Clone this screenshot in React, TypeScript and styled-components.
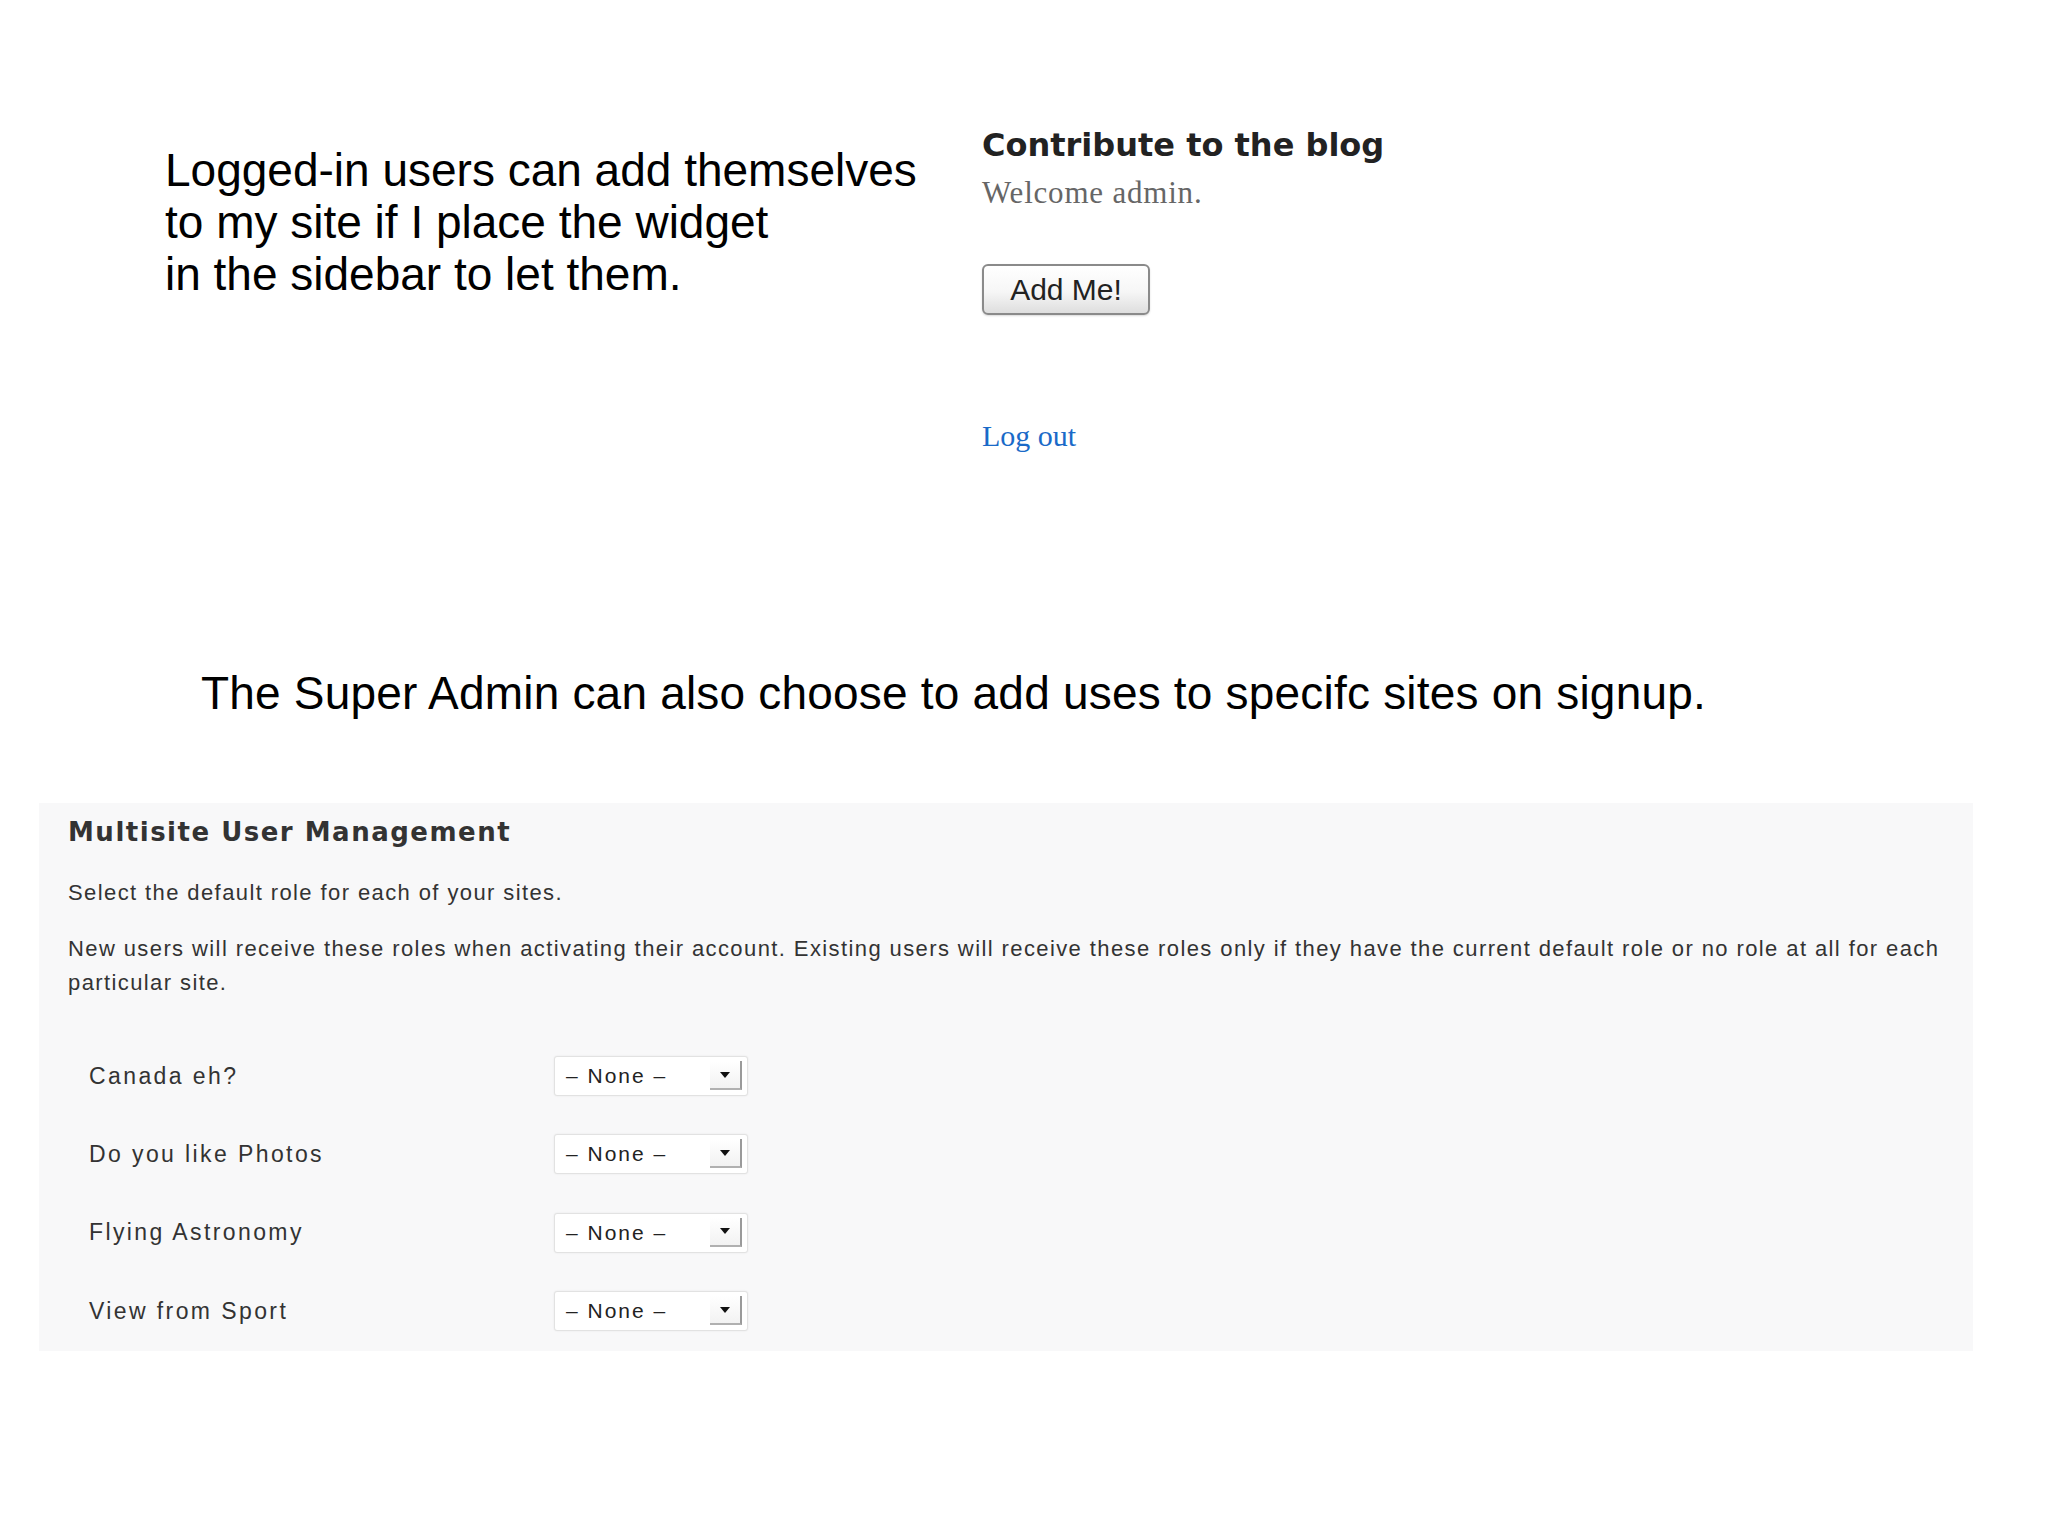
import React from 'react';
import styled, { createGlobalStyle } from 'styled-components';

const GlobalStyle = createGlobalStyle`
  html, body {
    margin: 0;
    padding: 0;
    background: #ffffff;
  }
  body {
    font-family: "Liberation Sans", Arial, sans-serif;
    color: #000;
  }
`;

const Page = styled.div`
  width: 2048px;
  height: 1535px;
  display: flex;
  flex-direction: column;
  overflow: hidden;
`;

const TopRow = styled.section`
  display: flex;
  padding-top: 125px;
`;

const Intro = styled.p`
  flex: 0 0 982px;
  box-sizing: border-box;
  margin: 19px 0 0;
  padding-left: 165px;
  font-size: 46px;
  line-height: 52px;
  color: #000;
`;

const Widget = styled.div`
  display: flex;
  flex-direction: column;
  align-items: flex-start;
`;

const WidgetTitle = styled.h2`
  margin: 0;
  font-family: "DejaVu Sans", sans-serif;
  font-weight: bold;
  font-size: 32px;
  line-height: 40px;
  color: #222;
`;

const Welcome = styled.p`
  margin: 9px 0 0;
  font-family: "Liberation Serif", "DejaVu Serif", serif;
  font-size: 31px;
  line-height: 38px;
  letter-spacing: 0.8px;
  color: #666;
`;

const AddButton = styled.button`
  margin-top: 52px;
  width: 168px;
  height: 51px;
  box-sizing: border-box;
  border: 2px solid #8a8a8a;
  border-radius: 6px;
  background: linear-gradient(#ffffff 0%, #f6f6f6 55%, #dedede 100%);
  box-shadow: 0 1px 2px rgba(0, 0, 0, 0.15);
  font-family: "Liberation Sans", Arial, sans-serif;
  font-size: 30px;
  color: #222;
  padding: 0;
`;

const LogOut = styled.a`
  margin-top: 102px;
  font-family: "Liberation Serif", "DejaVu Serif", serif;
  font-size: 30px;
  line-height: 38px;
  color: #1a6ac8;
  text-decoration: none;
`;

const Caption = styled.p`
  margin: 212px 0 0;
  padding-left: 201px;
  font-size: 46px;
  line-height: 52px;
  letter-spacing: 0.2px;
  color: #000;
`;

const Panel = styled.section`
  margin: 84px 0 0 39px;
  width: 1934px;
  box-sizing: border-box;
  padding: 13px 10px 1px 29px;
  background: #f8f8f9;
  color: #333;
`;

const PanelTitle = styled.h3`
  margin: 0;
  font-family: "DejaVu Sans", sans-serif;
  font-weight: bold;
  font-size: 26px;
  line-height: 32px;
  letter-spacing: 1.5px;
  color: #333;
`;

const Para = styled.p<{ $gap: number }>`
  margin: ${p => p.$gap}px 0 0;
  max-width: 1895px;
  font-size: 22px;
  line-height: 34px;
  letter-spacing: 1.4px;
  color: #333;
`;

const RoleList = styled.div`
  margin-top: 37px;
  display: flex;
  flex-direction: column;
`;

const RoleRow = styled.div`
  display: grid;
  grid-template-columns: 465px 194px;
  align-items: center;
  height: 78.3px;
  padding-left: 21px;
`;

const RoleLabel = styled.span`
  font-size: 23px;
  letter-spacing: 2.4px;
  color: #333;
`;

const Select = styled.div`
  position: relative;
  width: 194px;
  height: 40px;
  box-sizing: border-box;
  border: 1px solid #e2e2e2;
  border-radius: 3px;
  background: #fff;
  box-shadow: 0 0 2px rgba(0, 0, 0, 0.08);
  display: flex;
  align-items: center;
  padding-left: 11px;
  font-size: 21px;
  letter-spacing: 2px;
  color: #222;
`;

const Arrow = styled.span`
  position: absolute;
  right: 5px;
  top: 4px;
  width: 32px;
  height: 29px;
  box-sizing: border-box;
  border-right: 2px solid #9a9a9a;
  border-bottom: 2px solid #b0b0b0;
  background: linear-gradient(#ffffff, #f2f2f2);
  display: flex;
  align-items: center;
  justify-content: center;

  &::after {
    content: '';
    border-left: 5px solid transparent;
    border-right: 5px solid transparent;
    border-top: 6px solid #111;
  }
`;

const sites = ['Canada eh?', 'Do you like Photos', 'Flying Astronomy', 'View from Sport'];

const App = () => {
  return (
    <Page>
      <GlobalStyle />
      <TopRow>
        <Intro>
          Logged-in users can add themselves
          <br />
          to my site if I place the widget
          <br />
          in the sidebar to let them.
        </Intro>
        <Widget>
          <WidgetTitle>Contribute to the blog</WidgetTitle>
          <Welcome>Welcome admin.</Welcome>
          <AddButton>Add Me!</AddButton>
          <LogOut href="#">Log out</LogOut>
        </Widget>
      </TopRow>
      <Caption>The Super Admin can also choose to add uses to specifc sites on signup.</Caption>
      <Panel>
        <PanelTitle>Multisite User Management</PanelTitle>
        <Para $gap={28}>Select the default role for each of your sites.</Para>
        <Para $gap={22}>
          New users will receive these roles when activating their account. Existing users will
          receive these roles only if they have the current default role or no role at all for
          each particular site.
        </Para>
        <RoleList>
          {sites.map(site => (
            <RoleRow key={site}>
              <RoleLabel>{site}</RoleLabel>
              <Select>
                – None –
                <Arrow />
              </Select>
            </RoleRow>
          ))}
        </RoleList>
      </Panel>
    </Page>
  );
};

export default App;
